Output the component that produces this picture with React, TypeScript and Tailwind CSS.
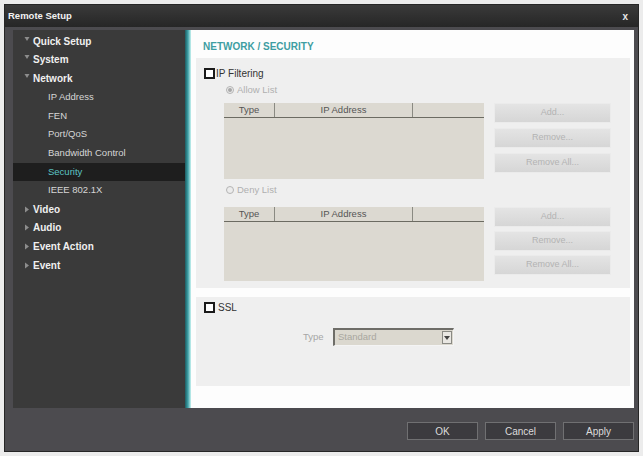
import React from "react";

const font = "font-['Liberation_Sans',Arial,sans-serif]";

function Bullet({ open }: { open: boolean }) {
  return open ? (
    <svg width="6" height="6" viewBox="0 0 6 6" className="mt-[-5px]">
      <path d="M0.5 1 L5.5 1 L3 5 Z" fill="#8d8d8d" />
    </svg>
  ) : (
    <svg width="6" height="7" viewBox="0 0 6 7">
      <path d="M1 0.5 L5 3.5 L1 6.5 Z" fill="#8d8d8d" />
    </svg>
  );
}

type NavItem = { label: string; level: 0 | 1; open?: boolean; active?: boolean };

const nav: NavItem[] = [
  { label: "Quick Setup", level: 0, open: true },
  { label: "System", level: 0, open: true },
  { label: "Network", level: 0, open: true },
  { label: "IP Address", level: 1 },
  { label: "FEN", level: 1 },
  { label: "Port/QoS", level: 1 },
  { label: "Bandwidth Control", level: 1 },
  { label: "Security", level: 1, active: true },
  { label: "IEEE 802.1X", level: 1 },
  { label: "Video", level: 0 },
  { label: "Audio", level: 0 },
  { label: "Event Action", level: 0 },
  { label: "Event", level: 0 },
];

function Checkbox() {
  return <div className="w-[11px] h-[11px] border-2 border-[#1a1a1a] bg-white shrink-0" />;
}

function Radio({ checked }: { checked: boolean }) {
  return (
    <div className="w-[8px] h-[8px] rounded-full border border-[#b4b4b4] bg-[#ececec] flex items-center justify-center shrink-0">
      {checked && <div className="w-[4px] h-[4px] rounded-full bg-[#a8a8a8]" />}
    </div>
  );
}

function SideButton({ label }: { label: string }) {
  return (
    <div className="w-[117px] h-[20px] bg-gradient-to-b from-[#e4e4e4] to-[#d6d6d6] border border-[#ebebeb] flex items-center justify-center text-[9px] text-[#b3b3b3]">
      {label}
    </div>
  );
}

function ListBlock({ h, gap }: { h: number; gap: string }) {
  return (
    <div className="flex ml-[20px]">
      <div className="w-[260px] bg-[#dcd9d1] flex flex-col" style={{ height: h }}>
        <div className="h-[15px] flex border-b border-[#6c6b62] text-[9.5px] text-[#555]">
          <div className="w-[51px] border-r border-[#8a8a82] flex items-center justify-center">Type</div>
          <div className="w-[138px] border-r border-[#8a8a82] flex items-center justify-center">IP Address</div>
          <div className="flex-1" />
        </div>
      </div>
      <div className={`ml-[10px] flex flex-col ${gap}`}>
        <SideButton label="Add..." />
        <SideButton label="Remove..." />
        <SideButton label="Remove All..." />
      </div>
    </div>
  );
}

function FooterButton({ label }: { label: string }) {
  return (
    <div className="w-[71px] h-[18px] bg-[#3c3b3f] border border-[#707072] flex items-center justify-center text-[10px] text-[#dcdcdc]">
      {label}
    </div>
  );
}

export default function App() {
  return (
    <div className={`w-[643px] h-[456px] bg-[#ececec] p-[4px] ${font}`}>
      <div className="w-full h-full flex flex-col bg-[#4c4b4f] border border-[#262626]">
        {/* Title bar */}
        <div className="h-[22px] bg-gradient-to-b from-[#3a3a3a] to-[#262626] flex items-center justify-between pl-[3px] pr-[10px]">
          <span className="text-[9.5px] font-bold text-[#f2f2f2]">Remote Setup</span>
          <span className="text-[10px] font-bold text-[#e6e6e6]">x</span>
        </div>
        {/* Body */}
        <div className="h-[381px] flex pt-[3px] pl-[8px] pr-[4px]">
          {/* Nav */}
          <div className="w-[172px] bg-[#3a3a3a] pt-[2px] flex flex-col">
            {nav.map((n) => (
              <div
                key={n.label}
                className={`h-[18.67px] flex items-center ${n.active ? "bg-[#1e1e1e]" : ""} ${
                  n.level === 0 ? "pl-[11px]" : "pl-[35px]"
                }`}
              >
                {n.level === 0 && (
                  <div className="w-[9px] flex items-center">
                    <Bullet open={!!n.open} />
                  </div>
                )}
                <span
                  className={
                    n.level === 0
                      ? "text-[10px] font-bold text-[#f0f0f0]"
                      : n.active
                      ? "text-[9.5px] text-[#5cc4c4]"
                      : "text-[9.5px] text-[#d6d6d6]"
                  }
                >
                  {n.label}
                </span>
              </div>
            ))}
          </div>
          {/* Teal strip */}
          <div className="w-[6px] bg-gradient-to-r from-[#1d5c62] via-[#3ea2a8] to-[#c8f4f2]" />
          {/* Panel */}
          <div className="flex-1 bg-[#fdfdfd] flex flex-col">
            <div className="h-[28px] pl-[12px] pt-[12px]">
              <div className="text-[10px] leading-none font-bold text-[#3e9ea2]">NETWORK / SECURITY</div>
            </div>
            {/* IP Filtering section */}
            <div className="ml-[5px] mr-[4px] h-[230px] bg-[#efefef] pt-[10px] pl-[8px] flex flex-col">
              <div className="h-[11px] flex items-center">
                <Checkbox />
                <span className="ml-[1px] text-[10px] text-[#333]">IP Filtering</span>
              </div>
              <div className="h-[12px] mt-[5px] ml-[22px] flex items-center">
                <Radio checked />
                <span className="ml-[3px] text-[9.5px] text-[#b0b0b0]">Allow List</span>
              </div>
              <div className="mt-[7px]">
                <ListBlock h={76} gap="gap-[5px]" />
              </div>
              <div className="h-[12px] mt-[5px] ml-[22px] flex items-center">
                <Radio checked={false} />
                <span className="ml-[3px] text-[9.5px] text-[#b0b0b0]">Deny List</span>
              </div>
              <div className="mt-[11px]">
                <ListBlock h={74} gap="gap-[4px]" />
              </div>
            </div>
            {/* SSL section */}
            <div className="ml-[5px] mr-[4px] mt-[9px] h-[89px] bg-[#efefef] pt-[5px] pl-[8px] flex flex-col">
              <div className="h-[11px] flex items-center">
                <Checkbox />
                <span className="ml-[3px] text-[10px] text-[#333]">SSL</span>
              </div>
              <div className="mt-[15px] ml-[99px] flex items-center">
                <span className="w-[30px] text-[9.5px] text-[#a6a6a6]">Type</span>
                <div className="w-[121px] h-[18px] bg-[#dbd8cf] border-l-2 border-t-2 border-[#6e6d68] border-r border-b border-r-[#f4f4f4] border-b-[#f4f4f4] flex items-center justify-between pl-[3px] pr-[1px]">
                  <span className="text-[9.5px] text-[#a9a79f]">Standard</span>
                  <div className="w-[10px] h-[13px] bg-[#e9e7e2] border border-[#8a8a84] flex items-center justify-center">
                    <svg width="6" height="4" viewBox="0 0 6 4">
                      <path d="M0 0 L6 0 L3 4 Z" fill="#444" />
                    </svg>
                  </div>
                </div>
              </div>
            </div>
            <div className="flex-1" />
          </div>
        </div>
        {/* Footer */}
        <div className="flex-1 flex justify-end items-start pt-[14px] pr-[4px] gap-[7px]">
          <FooterButton label="OK" />
          <FooterButton label="Cancel" />
          <FooterButton label="Apply" />
        </div>
      </div>
    </div>
  );
}
